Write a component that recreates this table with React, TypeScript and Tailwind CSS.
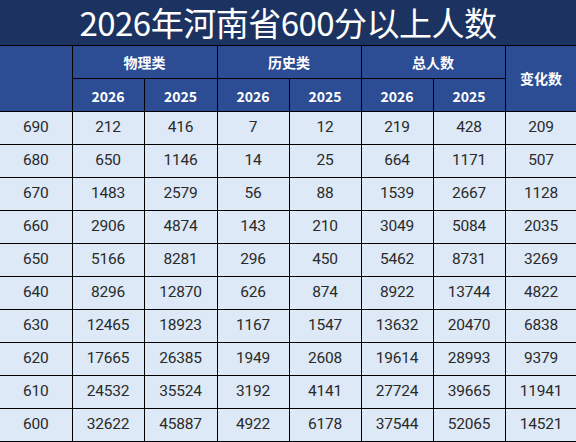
const rows = [
  [690, 212, 416, 7, 12, 219, 428, 209],
  [680, 650, 1146, 14, 25, 664, 1171, 507],
  [670, 1483, 2579, 56, 88, 1539, 2667, 1128],
  [660, 2906, 4874, 143, 210, 3049, 5084, 2035],
  [650, 5166, 8281, 296, 450, 5462, 8731, 3269],
  [640, 8296, 12870, 626, 874, 8922, 13744, 4822],
  [630, 12465, 18923, 1167, 1547, 13632, 20470, 6838],
  [620, 17665, 26385, 1949, 2608, 19614, 28993, 9379],
  [610, 24532, 35524, 3192, 4141, 27724, 39665, 11941],
  [600, 32622, 45887, 4922, 6178, 37544, 52065, 14521],
]

const cjk = { fontFamily: '"Noto Sans CJK SC", "Noto Sans", sans-serif' }
const nums = { fontFamily: 'Roboto, "Noto Sans CJK SC", sans-serif' }

export default function App() {
  return (
    <div className="w-[576px] h-[442px] overflow-hidden bg-[#dde9f6]" style={cjk}>
      {/* title */}
      <div className="h-[45px] bg-[#1c3260] flex items-center justify-center text-white text-[33px] leading-[45px] tracking-[-0.5px] whitespace-nowrap">
        2026年河南省600分以上人数
      </div>

      <table className="w-[577px] table-fixed border-collapse">
        <colgroup>
          <col className="w-[72px]" />
          <col className="w-[72px]" />
          <col className="w-[73px]" />
          <col className="w-[72px]" />
          <col className="w-[72px]" />
          <col className="w-[72px]" />
          <col className="w-[72px]" />
          <col className="w-[72px]" />
        </colgroup>
        <thead className="bg-[#2c4d94] text-white text-[14px] font-bold">
          <tr className="h-[33px]">
            <th rowSpan={2} className="border-y border-r border-black"></th>
            <th colSpan={2} className="border border-black font-bold">物理类</th>
            <th colSpan={2} className="border border-black font-bold">历史类</th>
            <th colSpan={2} className="border border-black font-bold">总人数</th>
            <th rowSpan={2} className="border border-black font-bold">变化数</th>
          </tr>
          <tr className="h-[33px]">
            {['2026', '2025', '2026', '2025', '2026', '2025'].map((y, i) => (
              <th key={i} className="border border-black pt-[3px] font-bold">{y}</th>
            ))}
          </tr>
        </thead>
        <tbody className="text-[15.5px] text-[#2a2a2a] tracking-[-0.2px]" style={nums}>
          {rows.map((r) => (
            <tr key={r[0]} className="h-[33px]">
              {r.map((v, i) => (
                <td key={i} className={`border border-black text-center ${i === 0 ? 'border-l-0' : ''}`}>
                  {v}
                </td>
              ))}
            </tr>
          ))}
        </tbody>
      </table>
    </div>
  )
}
